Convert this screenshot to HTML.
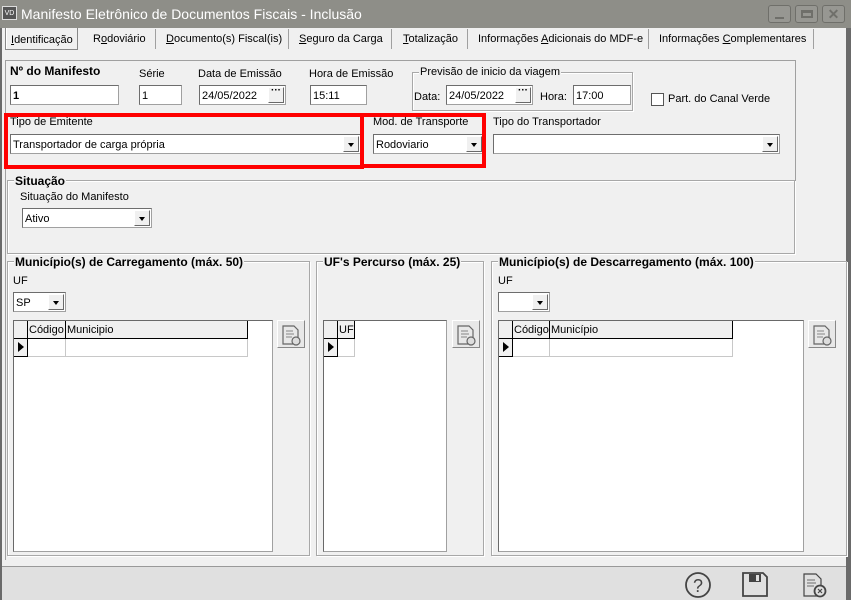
<!DOCTYPE html>
<html><head><meta charset="utf-8"><style>
*{box-sizing:border-box;margin:0;padding:0}
body{width:851px;height:600px;overflow:hidden;background:#f0f0f0;font-family:"Liberation Sans",Tahoma,sans-serif;font-size:11px;color:#000;position:relative}
.a{position:absolute}
.t{position:absolute;white-space:nowrap;font-size:11px}
.b{font-weight:bold}
.in{position:absolute;background:#fff;border:1px solid #a0a0a0;border-top-color:#6d6d6d;border-left-color:#6d6d6d;height:20px;padding:4px 2px 0;font-size:11px;white-space:nowrap}
.btn{position:absolute;top:1px;right:1px;width:16px;height:16px;background:#f0f0f0;border:1px solid #fff;border-right-color:#696969;border-bottom-color:#696969}
.arr:after{content:"";position:absolute;left:4px;top:6px;border-left:3px solid transparent;border-right:3px solid transparent;border-top:4px solid #000}
.dots:after{content:"···";position:absolute;left:2px;top:-3px;font-weight:bold;font-size:10px}
.grp{position:absolute;border:1px solid #a8a8a8;box-shadow:inset 1px 1px 0 #fff,1px 1px 0 #fff}
.gl{position:absolute;top:-7px;left:6px;background:#f0f0f0;padding:0 1px;font-weight:bold;font-size:11px}
.grid{position:absolute;background:#fff;border:1px solid #a0a0a0;border-top-color:#696969;border-left-color:#696969}
.hc{position:absolute;top:0;height:18px;background:#f0f0f0;border-right:1px solid #000;border-bottom:1px solid #000;padding:3px 1px 0;font-size:11px}
.cell{position:absolute;top:18px;height:18px;border-right:1px solid #c8c8c8;border-bottom:1px solid #c8c8c8}
.ind{position:absolute;left:0;top:18px;width:14px;height:18px;background:#f0f0f0;border-right:1px solid #000;border-bottom:1px solid #000}
.ind:after{content:"";position:absolute;left:4px;top:3px;border-top:5px solid transparent;border-bottom:5px solid transparent;border-left:6px solid #000}
.db{position:absolute;width:28px;height:28px;background:#e8e8e8;border:1px solid #fff;border-right-color:#888;border-bottom-color:#888}
.red{position:absolute;border:4px solid #f00}
</style></head><body>
<!-- title -->
<div class="a" style="left:0;top:0;width:851px;height:28px;background:#8e8e88"></div>
<div class="a" style="left:2px;top:6px;width:15px;height:14px;background:#555;color:#fff;font-size:7px;text-align:center;line-height:14px;border:1px solid #ddd">VD</div>
<div class="t" style="left:21px;top:6px;font-size:14px;color:#fff">Manifesto Eletrônico de Documentos Fiscais - Inclusão</div>
<div class="a" style="left:768px;top:5px;width:23px;height:18px;border:1px solid #6f6f6a;border-radius:3px;background:#979792"><div class="a" style="left:6px;top:11px;width:9px;height:2px;background:#6f6f6a"></div></div>
<div class="a" style="left:795px;top:5px;width:23px;height:18px;border:1px solid #6f6f6a;border-radius:3px;background:#979792"><div class="a" style="left:5px;top:4px;width:12px;height:8px;border:2px solid #6f6f6a;border-top-width:3px"></div></div>
<div class="a" style="left:822px;top:5px;width:23px;height:18px;border:1px solid #6f6f6a;border-radius:3px;background:#979792;color:#6f6f6a;font-weight:bold;font-size:14px;text-align:center;line-height:16px">✕</div>
<div class="a" style="left:0;top:28px;width:2px;height:572px;background:#6a6a6a"></div>
<div class="a" style="left:846px;top:28px;width:5px;height:572px;background:#6a6a6a"></div>
<!-- tabs -->
<div class="a" style="left:5px;top:28px;width:73px;height:22px;border:1px solid #888;border-top:none;background:#f0f0f0;box-shadow:inset 1px 0 #fff"></div>
<div class="t" style="left:11px;top:34px"><u>I</u>dentificação</div>
<div class="t" style="left:93px;top:33px">R<u>o</u>doviário</div>
<div class="t" style="left:166px;top:33px"><u>D</u>ocumento(s) Fiscal(is)</div>
<div class="t" style="left:299px;top:33px"><u>S</u>eguro da Carga</div>
<div class="t" style="left:403px;top:33px"><u>T</u>otalização</div>
<div class="t" style="left:478px;top:33px">Informações <u>A</u>dicionais do MDF-e</div>
<div class="t" style="left:659px;top:33px">Informações <u>C</u>omplementares</div>
<div class="a" style="left:155px;top:29px;width:1px;height:20px;background:#a0a0a0"></div>
<div class="a" style="left:288px;top:29px;width:1px;height:20px;background:#a0a0a0"></div>
<div class="a" style="left:391px;top:29px;width:1px;height:20px;background:#a0a0a0"></div>
<div class="a" style="left:467px;top:29px;width:1px;height:20px;background:#a0a0a0"></div>
<div class="a" style="left:648px;top:29px;width:1px;height:20px;background:#a0a0a0"></div>
<div class="a" style="left:813px;top:29px;width:1px;height:20px;background:#a0a0a0"></div>
<!-- panel -->
<div class="a" style="left:5px;top:60px;width:791px;height:500px;border-left:1px solid #a0a0a0;border-top:1px solid #a0a0a0"></div>
<div class="a" style="left:795px;top:60px;width:1px;height:195px;background:#a0a0a0"></div>
<div class="t b" style="left:10px;top:64px;font-size:12px">Nº do Manifesto</div>
<div class="in b" style="left:10px;top:85px;width:109px">1</div>
<div class="t" style="left:139px;top:68px">Série</div>
<div class="in" style="left:139px;top:85px;width:43px">1</div>
<div class="t" style="left:198px;top:68px">Data de Emissão</div>
<div class="in" style="left:199px;top:85px;width:87px">24/05/2022<div class="btn dots"></div></div>
<div class="t" style="left:309px;top:68px">Hora de Emissão</div>
<div class="in" style="left:310px;top:85px;width:57px">15:11</div>
<div class="grp" style="left:412px;top:72px;width:221px;height:39px"><div class="gl" style="font-weight:normal">Previsão de inicio da viagem</div></div>
<div class="t" style="left:414px;top:91px">Data:</div>
<div class="in" style="left:446px;top:85px;width:87px">24/05/2022<div class="btn dots"></div></div>
<div class="t" style="left:540px;top:91px">Hora:</div>
<div class="in" style="left:573px;top:85px;width:58px">17:00</div>
<div class="a" style="left:651px;top:93px;width:13px;height:13px;background:#fff;border:1px solid #555"></div>
<div class="t" style="left:668px;top:93px">Part. do Canal Verde</div>
<div class="t" style="left:10px;top:116px">Tipo de Emitente</div>
<div class="in" style="left:10px;top:134px;width:351px">Transportador de carga própria<div class="btn arr"></div></div>
<div class="t" style="left:373px;top:116px">Mod. de Transporte</div>
<div class="in" style="left:373px;top:134px;width:111px">Rodoviario<div class="btn arr"></div></div>
<div class="t" style="left:493px;top:116px">Tipo do Transportador</div>
<div class="in" style="left:493px;top:134px;width:287px"><div class="btn arr"></div></div>
<div class="red" style="left:4px;top:113px;width:360px;height:56px"></div>
<div class="red" style="left:360px;top:113px;width:126px;height:55px"></div>
<!-- situacao -->
<div class="grp" style="left:7px;top:180px;width:788px;height:74px"><div class="gl" style="font-size:12px">Situação</div></div>
<div class="t" style="left:20px;top:191px">Situação do Manifesto</div>
<div class="in" style="left:22px;top:208px;width:130px">Ativo<div class="btn arr"></div></div>
<!-- group1 -->
<div class="grp" style="left:7px;top:261px;width:303px;height:295px"><div class="gl" style="font-size:12px">Município(s) de Carregamento (máx. 50)</div></div>
<div class="t" style="left:13px;top:275px">UF</div>
<div class="in" style="left:13px;top:292px;width:53px">SP<div class="btn arr"></div></div>
<div class="grid" style="left:13px;top:320px;width:260px;height:232px">
<div class="hc" style="left:0;width:14px"></div><div class="hc" style="left:14px;width:38px">Código</div><div class="hc" style="left:52px;width:182px">Municipio</div>
<div class="ind"></div><div class="cell" style="left:14px;width:38px"></div><div class="cell" style="left:52px;width:182px"></div></div>
<div class="db" style="left:277px;top:320px"></div>
<!-- group2 -->
<div class="grp" style="left:316px;top:261px;width:168px;height:295px"><div class="gl" style="font-size:12px">UF's Percurso (máx. 25)</div></div>
<div class="grid" style="left:323px;top:320px;width:124px;height:232px">
<div class="hc" style="left:0;width:14px"></div><div class="hc" style="left:14px;width:17px">UF</div>
<div class="ind"></div><div class="cell" style="left:14px;width:17px"></div></div>
<div class="db" style="left:452px;top:320px"></div>
<!-- group3 -->
<div class="grp" style="left:491px;top:261px;width:356px;height:295px"><div class="gl" style="font-size:12px">Município(s) de Descarregamento (máx. 100)</div></div>
<div class="t" style="left:498px;top:275px">UF</div>
<div class="in" style="left:498px;top:292px;width:52px"><div class="btn arr"></div></div>
<div class="grid" style="left:498px;top:320px;width:306px;height:232px">
<div class="hc" style="left:0;width:14px"></div><div class="hc" style="left:14px;width:37px">Código</div><div class="hc" style="left:51px;width:183px">Município</div>
<div class="ind"></div><div class="cell" style="left:14px;width:37px"></div><div class="cell" style="left:51px;width:183px"></div></div>
<div class="db" style="left:808px;top:320px"></div>
<!-- bottom -->
<div class="a" style="left:2px;top:566px;width:844px;height:34px;background:#e0e0e0;border-top:1px solid #999"></div>
<svg class="a" style="left:0;top:0" width="851" height="600">
<g fill="none" stroke="#666" stroke-width="1.2">
<path d="M283 326h11l4 4v14h-15z"/><path d="M458 326h11l4 4v14h-15z"/><path d="M814 326h11l4 4v14h-15z"/>
<path d="M286 331h7M286 334h8M286 337h6M461 331h7M461 334h8M461 337h6M817 331h7M817 334h8M817 337h6" stroke-width="0.8"/>
<circle cx="296" cy="341" r="4" fill="#ddd"/><circle cx="471" cy="341" r="4" fill="#ddd"/><circle cx="827" cy="341" r="4" fill="#ddd"/>
</g>
<g fill="none" stroke="#444" stroke-width="1.8">
<circle cx="698" cy="585" r="12"/>
<path d="M743 573h20l4 4v19h-24z"/>
<path d="M804 574h12l5 5v17h-17z" stroke-width="1.2"/>
<path d="M807 580h8M807 583h9M807 586h7" stroke-width="0.8"/>
<circle cx="820" cy="591" r="5.5" fill="#e0e0e0"/>
<path d="M818 589l4 4M822 589l-4 4" stroke-width="1.2"/>
</g>
<rect x="749" y="574" width="12" height="8" fill="#444"/><rect x="756" y="575" width="3" height="6" fill="#e0e0e0"/>
<text x="698" y="592" font-family="Liberation Sans" font-size="18" text-anchor="middle" fill="#444">?</text>
</svg>
</body></html>
